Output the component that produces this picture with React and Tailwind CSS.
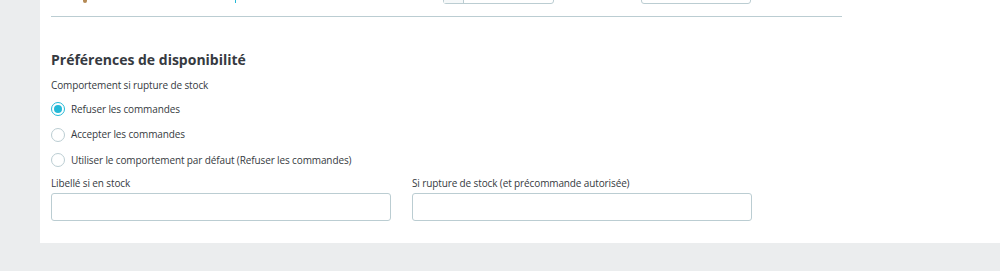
import React, { useState } from 'react';

const font = { fontFamily: '"Open Sans", "Noto Sans", sans-serif' };

function Radio({ checked, label, onChange }) {
  return (
    <label className="flex items-center gap-[6px] h-[14px] cursor-pointer">
      <span
        className={
          'flex items-center justify-center w-[14px] h-[14px] rounded-full border ' +
          (checked ? 'border-[#25b9d7]' : 'border-[#bbcdd2]')
        }
        onClick={onChange}
      >
        {checked && <span className="w-[8px] h-[8px] rounded-full bg-[#25b9d7]" />}
      </span>
      <span className="text-[10px] tracking-[-0.12px] text-[#363a41]">{label}</span>
    </label>
  );
}

export default function App() {
  const [choice, setChoice] = useState(0);
  const options = [
    'Refuser les commandes',
    'Accepter les commandes',
    'Utiliser le comportement par défaut (Refuser les commandes)',
  ];

  return (
    <div className="w-[1000px] h-[271px] bg-[#ebedee] flex flex-col overflow-hidden" style={font}>
      <div className="h-[243px] ml-[40px] bg-white flex flex-col">
        {/* tail of the section above, cut off by the screenshot */}
        <div className="relative h-[4px] ml-[11px] w-[791px]">
          <span className="absolute left-[32px] top-[-2px] w-[4px] h-[5px] rounded-b-sm bg-[#b48a55]" />
          <span className="absolute left-[184px] top-[-2px] w-[1px] h-[5px] bg-[#25b9d7]" />
          <div className="absolute left-[392px] top-[-10px] w-[111px] h-[14px] border border-[#bbcdd2] rounded-[3px] flex">
            <div className="w-[20px] bg-[#f5f8f9] border-r border-[#bbcdd2]" />
          </div>
          <div className="absolute left-[590px] top-[-10px] w-[110px] h-[14px] border border-[#bbcdd2] rounded-[3px]" />
        </div>
        <div className="ml-[11px] mt-[12px] w-[791px] h-px bg-[#bbcdd2]" />

        <div className="pl-[11px] pt-[34px] flex flex-col">
          <h2 className="text-[14px] leading-[18px] font-bold text-[#363a41]">Préférences de disponibilité</h2>
          <div className="mt-[9px] text-[10px] tracking-[-0.12px] leading-[14px] text-[#363a41]">Comportement si rupture de stock</div>
          <div className="mt-[10px] flex flex-col gap-[11.5px]">
            {options.map((o, i) => (
              <Radio key={o} label={o} checked={choice === i} onChange={() => setChoice(i)} />
            ))}
          </div>
          <div className="mt-[9px] flex gap-[21px]">
            <div className="w-[340px] flex flex-col gap-[3px]">
              <span className="text-[10px] tracking-[-0.12px] leading-[14px] text-[#363a41]">Libellé si en stock</span>
              <input className="h-[28px] border border-[#bbcdd2] rounded-[3px] px-2 text-[11px] outline-none" />
            </div>
            <div className="w-[340px] flex flex-col gap-[3px]">
              <span className="text-[10px] tracking-[-0.12px] leading-[14px] text-[#363a41]">Si rupture de stock (et précommande autorisée)</span>
              <input className="h-[28px] border border-[#bbcdd2] rounded-[3px] px-2 text-[11px] outline-none" />
            </div>
          </div>
        </div>
      </div>
    </div>
  );
}
